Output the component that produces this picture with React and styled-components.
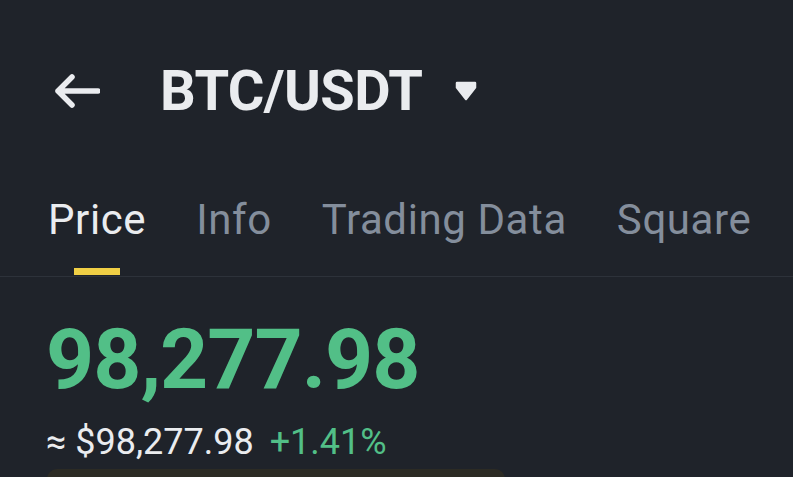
import React from 'react';
import styled, {createGlobalStyle} from 'styled-components';

const Global = createGlobalStyle`
    html, body {
        margin: 0;
        padding: 0;
        background: #1f232a;
    }
    body {
        font-family: Roboto, "Liberation Sans", sans-serif;
        overflow: hidden;
    }
`;

const Screen = styled.div`
    width: 793px;
    height: 477px;
    background: #1f232a;
    overflow: hidden;
    display: flex;
    flex-direction: column;

    & > * {
        flex-shrink: 0;
    }
`;

const Header = styled.div`
    display: flex;
    align-items: center;
    height: 72px;
    margin-top: 55px;
    padding-left: 53px;
`;

const BackBtn = styled.button`
    display: flex;
    align-items: center;
    justify-content: center;
    width: 47px;
    height: 40px;
    padding: 0;
    border: none;
    background: none;
    color: #eaecef;
`;

const Pair = styled.h1`
    margin: 0 0 0 60px;
    font-size: 56px;
    font-weight: 700;
    letter-spacing: -0.6px;
    color: #eaecef;
    line-height: 1;
`;

const Caret = styled.span`
    display: flex;
    margin-left: 33px;
    color: #eaecef;
`;

const Tabs = styled.nav`
    display: flex;
    gap: 50px;
    padding-left: 48px;
    margin-top: 68px;
    border-bottom: 1px solid #2d323a;
`;

const Tab = styled.div`
    position: relative;
    flex-shrink: 0;
    white-space: nowrap;
    padding-bottom: 31px;
    font-size: 42px;
    line-height: 1.2;
    font-weight: 400;
    letter-spacing: 0.6px;
    color: ${p => (p.active ? '#eaecef' : '#848e9c')};

    &::after {
        content: '';
        display: ${p => (p.active ? 'block' : 'none')};
        position: absolute;
        left: 50%;
        bottom: 1px;
        width: 46px;
        height: 7px;
        transform: translateX(-50%);
        background: #f0cf45;
    }
`;

const PriceBlock = styled.section`
    display: flex;
    flex-direction: column;
    padding-left: 46px;
    margin-top: 41px;
`;

const BigPrice = styled.div`
    font-size: 84px;
    font-weight: 700;
    letter-spacing: -1px;
    line-height: 1;
    color: #52bf87;
`;

const SubLine = styled.div`
    display: flex;
    align-items: baseline;
    gap: 16px;
    margin-top: 22px;
    font-size: 36px;
    line-height: 1;
    font-weight: 400;
    white-space: nowrap;
`;

const Fiat = styled.span`
    color: #eaecef;
`;

const Change = styled.span`
    color: ${p => (p.up ? '#52bf87' : '#f6465d')};
`;

const Banner = styled.div`
    width: 458px;
    height: 30px;
    margin-top: 9px;
    margin-left: 47px;
    border-radius: 10px 10px 0 0;
    background: #2c2b24;
`;

const tabs = ['Price', 'Info', 'Trading Data', 'Square'];

export default function App() {
    return (
        <Screen>
            <Global/>
            {/* Шапка с парой */}
            <Header>
                <BackBtn>
                    <svg width="47" height="36" viewBox="0 0 47 36" fill="none">
                        <path d="M45 18H5M19 4L5 18l14 14" stroke="currentColor"
                              strokeWidth="5.5" strokeLinecap="round" strokeLinejoin="round"/>
                    </svg>
                </BackBtn>
                <Pair>BTC/USDT</Pair>
                <Caret>
                    <svg width="22" height="20" viewBox="0 0 22 20">
                        <path d="M2 2h18v4.5L11 18 2 6.5z" fill="currentColor"
                              stroke="currentColor" strokeWidth="2.5" strokeLinejoin="round"/>
                    </svg>
                </Caret>
            </Header>

            {/* Вкладки */}
            <Tabs>
                {tabs.map(t => <Tab key={t} active={t === 'Price'}>{t}</Tab>)}
            </Tabs>

            {/* Цена */}
            <PriceBlock>
                <BigPrice>98,277.98</BigPrice>
                <SubLine>
                    <Fiat>≈ $98,277.98</Fiat>
                    <Change up>+1.41%</Change>
                </SubLine>
            </PriceBlock>
            <Banner/>
        </Screen>
    );
}
